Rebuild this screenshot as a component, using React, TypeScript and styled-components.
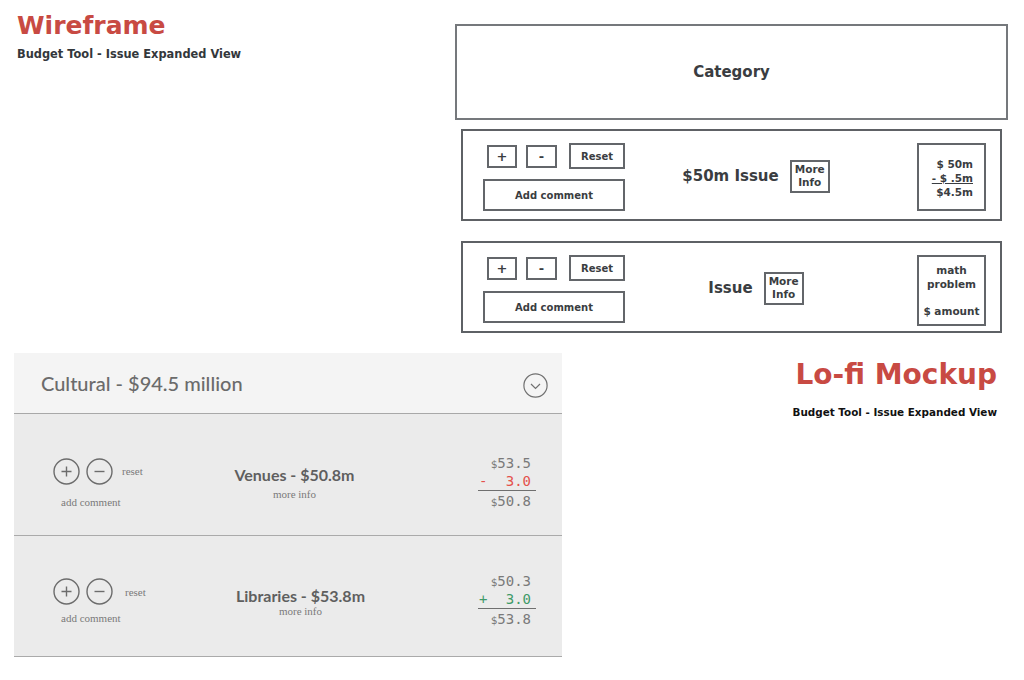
import React from "react";
import styled, { createGlobalStyle } from "styled-components";

const GlobalStyle = createGlobalStyle`
  html, body {
    margin: 0;
    padding: 0;
    background: #fff;
  }
  body {
    width: 1024px;
    height: 680px;
    overflow: hidden;
    font-family: "DejaVu Sans", sans-serif;
  }
`;

const Board = styled.div`
  display: flex;
  flex-direction: column;
  width: 1024px;
  height: 680px;
`;

const TopRow = styled.div`
  display: flex;
  justify-content: space-between;
  align-items: flex-start;
  padding: 8px 16px 0 17px;
`;

const BottomRow = styled.div`
  display: flex;
  align-items: flex-start;
  margin-top: 20px;
  padding: 0 27px 0 14px;
`;

const Heading = styled.div<{ $right?: boolean }>`
  display: flex;
  flex-direction: column;
  align-items: ${(p) => (p.$right ? "flex-end" : "flex-start")};
  margin-left: ${(p) => (p.$right ? "auto" : "0")};
  margin-top: ${(p) => (p.$right ? "4px" : "2px")};
`;

const Title = styled.h1<{ $size: number }>`
  margin: 0;
  font-family: "DejaVu Sans", sans-serif;
  font-weight: bold;
  font-size: ${(p) => p.$size}px;
  line-height: 1.25;
  color: #c84a43;
`;

const Subtitle = styled.div<{ $size: number; $color: string; $gap: number }>`
  margin-top: ${(p) => p.$gap}px;
  font-family: "DejaVu Sans", sans-serif;
  font-weight: bold;
  font-size: ${(p) => p.$size}px;
  color: ${(p) => p.$color};
`;

/* ---------- wireframe ---------- */

const WireStack = styled.div`
  display: flex;
  flex-direction: column;
  align-items: center;
  gap: 9px;
  width: 553px;
  margin-top: 16px;
`;

const IssueList = styled.div`
  display: flex;
  flex-direction: column;
  gap: 20px;
`;

const CategoryBox = styled.div`
  box-sizing: border-box;
  width: 553px;
  height: 96px;
  border: 2px solid #75787c;
  display: flex;
  align-items: center;
  justify-content: center;
  font-weight: bold;
  font-size: 15px;
  color: #3a3d41;
`;

const IssueBox = styled.div`
  box-sizing: border-box;
  width: 541px;
  height: 92px;
  border: 2px solid #5e6165;
  display: flex;
  align-items: flex-start;
  padding: 12px 14px 0 20px;
  color: #3a3d41;
`;

const Controls = styled.div`
  display: flex;
  flex-direction: column;
  gap: 10px;
  width: 142px;
`;

const ControlTop = styled.div`
  display: flex;
  align-items: center;
  padding-left: 4px;
`;

const WireButton = styled.div<{ $w: number; $h: number; $gap?: number; $big?: boolean }>`
  box-sizing: border-box;
  width: ${(p) => p.$w}px;
  height: ${(p) => p.$h}px;
  margin-left: ${(p) => p.$gap ?? 0}px;
  border: 2px solid #63666a;
  display: flex;
  align-items: center;
  justify-content: center;
  font-weight: bold;
  font-size: ${(p) => (p.$big ? 13 : 10)}px;
  color: #3a3d41;
`;

const IssueCenter = styled.div`
  flex: 1;
  align-self: center;
  display: flex;
  align-items: center;
  justify-content: center;
  gap: 11px;
  padding-right: 30px;
  margin-bottom: 10px;
`;

const IssueName = styled.div`
  font-weight: bold;
  font-size: 15px;
  color: #3a3d41;
`;

const MoreInfoBox = styled.div`
  box-sizing: border-box;
  width: 40px;
  height: 33px;
  border: 2px solid #63666a;
  display: flex;
  flex-direction: column;
  align-items: center;
  justify-content: center;
  font-weight: bold;
  font-size: 10.5px;
  line-height: 13px;
`;

const MathBox = styled.div<{ $h: number; $align: "right" | "center" }>`
  box-sizing: border-box;
  width: 69px;
  height: ${(p) => p.$h}px;
  border: 2px solid #63666a;
  display: flex;
  flex-direction: column;
  justify-content: ${(p) => (p.$align === "right" ? "center" : "space-between")};
  align-items: ${(p) => (p.$align === "right" ? "flex-end" : "center")};
  text-align: ${(p) => p.$align};
  padding: ${(p) => (p.$align === "right" ? "2px 11px 0 0" : "6px 0 6px")};
  font-weight: bold;
  font-size: 10.5px;
  line-height: 14px;
`;

const Underlined = styled.span`
  text-decoration: underline;
`;

/* ---------- lo-fi mockup ---------- */

const Panel = styled.div`
  width: 548px;
  display: flex;
  flex-direction: column;
`;

const PanelHeader = styled.div`
  height: 60px;
  background: #f4f4f4;
  border-bottom: 1px solid #a8a8a8;
  display: flex;
  align-items: center;
  justify-content: space-between;
  padding: 0 14px 0 27px;
  font-family: "Lato", sans-serif;
  font-weight: 500;
  font-size: 20px;
  color: #6b6b6b;

  svg {
    margin-top: 5px;
  }
`;

const IssueRow = styled.div<{ $h: number; $top: number }>`
  height: ${(p) => p.$h}px;
  background: #ebebeb;
  border-bottom: 1.5px solid #aaaaaa;
  display: flex;
  align-items: center;
  padding: ${(p) => p.$top}px 26px 0 39px;
  box-sizing: border-box;
`;

const RowControls = styled.div<{ $gap: number }>`
  display: flex;
  flex-direction: column;
  gap: ${(p) => p.$gap}px;
  width: 104px;
`;

const CircleRow = styled.div`
  display: flex;
  align-items: center;
  gap: 6px;
`;

const SerifNote = styled.span<{ $pad?: number }>`
  font-family: "Liberation Serif", serif;
  font-size: 11px;
  color: #7a7a7a;
  padding-left: ${(p) => p.$pad ?? 0}px;
`;

const RowCenter = styled.div<{ $gap: number; $shift: number }>`
  flex: 1;
  display: flex;
  flex-direction: column;
  align-items: center;
  gap: ${(p) => p.$gap}px;
  padding-right: ${(p) => p.$shift}px;
`;

const RowTitle = styled.div`
  font-family: "Lato", sans-serif;
  font-weight: bold;
  font-size: 16px;
  color: #5f5f5f;
`;

const Figures = styled.div`
  width: 58px;
  font-family: "DejaVu Sans Mono", monospace;
  font-size: 14px;
  line-height: 17px;
  color: #7a7a7a;
`;

const FigLine = styled.div`
  text-align: right;
  padding-right: 5px;
`;

const OpLine = styled.div<{ $tone: string }>`
  display: flex;
  justify-content: space-between;
  padding: 0 5px 0 1px;
  color: ${(p) => p.$tone};
`;

const Rule = styled.div`
  height: 1px;
  background: #6f6f6f;
  margin-bottom: 2px;
`;

const Dollar = styled.span`
  font-size: 11px;
`;

const CircleIcon = ({ minus }: { minus?: boolean }) => (
  <svg width="27" height="27" viewBox="0 0 27 27">
    <circle cx="13.5" cy="13.5" r="12.5" fill="none" stroke="#6c6c6c" strokeWidth="1.4" />
    <path
      d={minus ? "M8.5 13.5h10" : "M8.5 13.5h10M13.5 8.5v10"}
      stroke="#6c6c6c"
      strokeWidth="1.4"
      fill="none"
    />
  </svg>
);

const ChevronIcon = () => (
  <svg width="25" height="25" viewBox="0 0 25 25">
    <circle cx="12.5" cy="12.5" r="11.6" fill="none" stroke="#707070" strokeWidth="1.2" />
    <path d="M8 11l4.5 4.5L17 11" fill="none" stroke="#707070" strokeWidth="1.2" />
  </svg>
);

type RowData = {
  title: string;
  from: string;
  op: string;
  delta: string;
  to: string;
  tone: string;
  h: number;
  top: number;
  controlGap: number;
  titleGap: number;
  resetPad: number;
  shift: number;
};

const rows: RowData[] = [
  {
    title: "Venues - $50.8m",
    from: "53.5",
    op: "-",
    delta: "3.0",
    to: "50.8",
    tone: "#e4524b",
    h: 122,
    top: 16,
    controlGap: 11,
    titleGap: 4,
    resetPad: 3,
    shift: 46,
  },
  {
    title: "Libraries - $53.8m",
    from: "50.3",
    op: "+",
    delta: "3.0",
    to: "53.8",
    tone: "#3f9a68",
    h: 121,
    top: 10,
    controlGap: 7,
    titleGap: 0,
    resetPad: 6,
    shift: 34,
  },
];

function WireIssue({ name, math }: { name: string; math: "sum" | "placeholder" }) {
  return (
    <IssueBox>
      <Controls>
        <ControlTop>
          <WireButton $w={30} $h={23} $big>+</WireButton>
          <WireButton $w={31} $h={23} $gap={9} $big>-</WireButton>
          <WireButton $w={56} $h={26} $gap={12}>Reset</WireButton>
        </ControlTop>
        <WireButton $w={142} $h={32}>Add comment</WireButton>
      </Controls>
      <IssueCenter>
        <IssueName>{name}</IssueName>
        <MoreInfoBox>
          <span>More</span>
          <span>Info</span>
        </MoreInfoBox>
      </IssueCenter>
      {math === "sum" ? (
        <MathBox $h={68} $align="right">
          <span>$ 50m</span>
          <Underlined>- $ .5m</Underlined>
          <span>$4.5m</span>
        </MathBox>
      ) : (
        <MathBox $h={71} $align="center">
          <div>
            <div>math</div>
            <div>problem</div>
          </div>
          <span>$ amount</span>
        </MathBox>
      )}
    </IssueBox>
  );
}

function MockRow({ r }: { r: RowData }) {
  return (
    <IssueRow $h={r.h} $top={r.top}>
      <RowControls $gap={r.controlGap}>
        <CircleRow>
          <CircleIcon />
          <CircleIcon minus />
          <SerifNote $pad={r.resetPad}>reset</SerifNote>
        </CircleRow>
        <SerifNote $pad={8}>add comment</SerifNote>
      </RowControls>
      <RowCenter $gap={r.titleGap} $shift={r.shift}>
        <RowTitle>{r.title}</RowTitle>
        <SerifNote>more info</SerifNote>
      </RowCenter>
      <Figures>
        <FigLine>
          <Dollar>$</Dollar>
          {r.from}
        </FigLine>
        <OpLine $tone={r.tone}>
          <span>{r.op}</span>
          <span>{r.delta}</span>
        </OpLine>
        <Rule />
        <FigLine>
          <Dollar>$</Dollar>
          {r.to}
        </FigLine>
      </Figures>
    </IssueRow>
  );
}

export default function App() {
  return (
    <>
      <GlobalStyle />
      <Board>
        <TopRow>
          <Heading>
            <Title $size={25}>Wireframe</Title>
            <Subtitle $size={11.4} $color="#33373b" $gap={6}>
              Budget Tool - Issue Expanded View
            </Subtitle>
          </Heading>
          <WireStack>
            <CategoryBox>Category</CategoryBox>
            <IssueList>
              <WireIssue name="$50m Issue" math="sum" />
              <WireIssue name="Issue" math="placeholder" />
            </IssueList>
          </WireStack>
        </TopRow>
        <BottomRow>
          <Panel>
            <PanelHeader>
              <span>Cultural - $94.5 million</span>
              <ChevronIcon />
            </PanelHeader>
            {rows.map((r) => (
              <MockRow key={r.title} r={r} />
            ))}
          </Panel>
          <Heading $right>
            <Title $size={28}>Lo-fi Mockup</Title>
            <Subtitle $size={10.4} $color="#111" $gap={14}>
              Budget Tool - Issue Expanded View
            </Subtitle>
          </Heading>
        </BottomRow>
      </Board>
    </>
  );
}
